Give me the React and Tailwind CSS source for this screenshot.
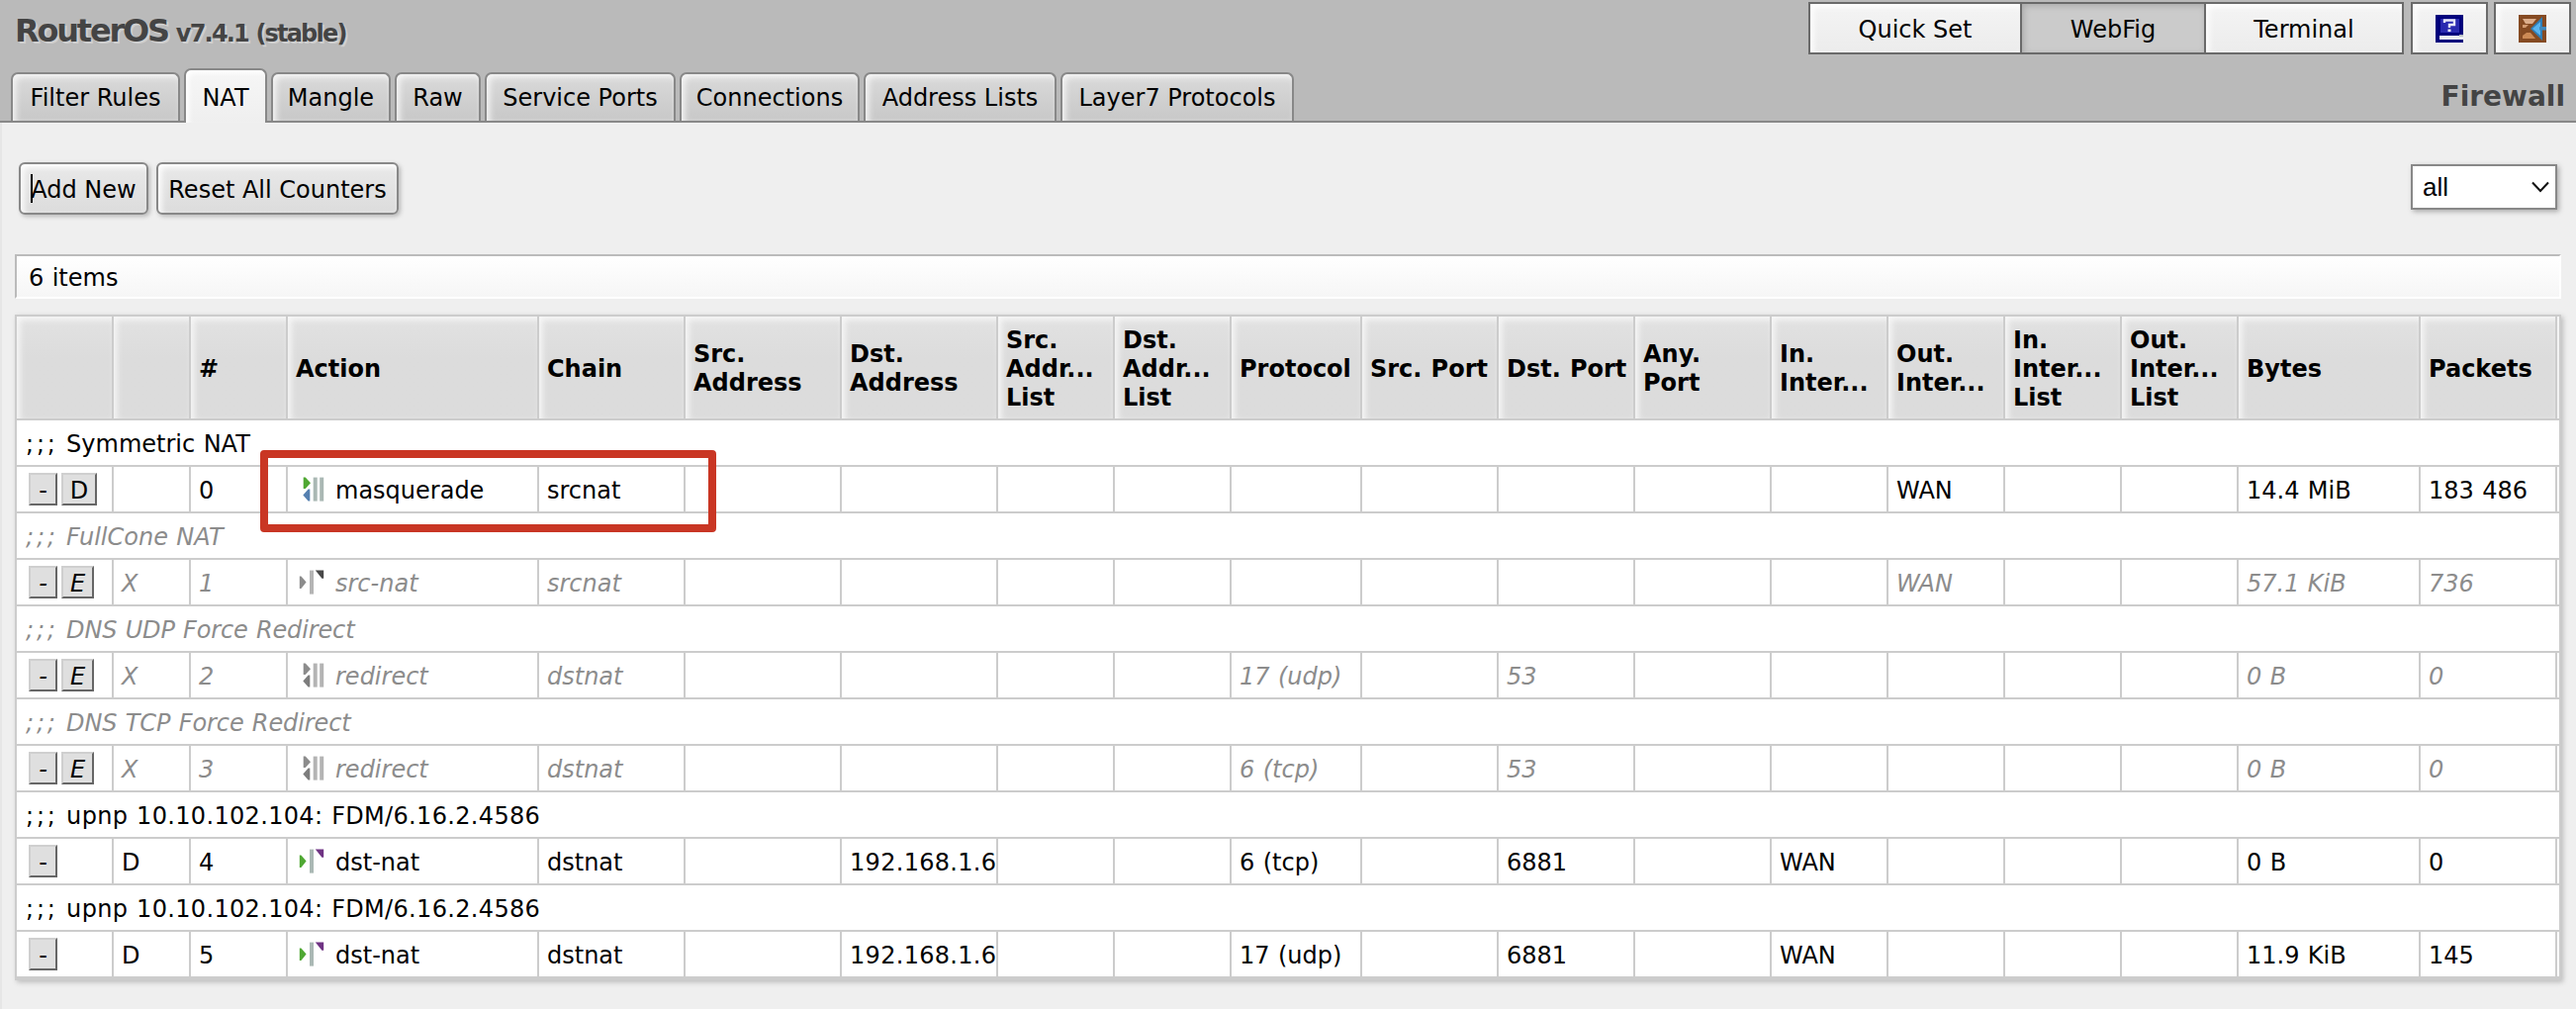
const headerTabs = [
  ["Filter Rules", "w-[171px]"],
  ["NAT", "w-[84px]"],
  ["Mangle", "w-[121px]"],
  ["Raw", "w-[87px]"],
  ["Service Ports", "w-[193px]"],
  ["Connections", "w-[182px]"],
  ["Address Lists", "w-[195px]"],
  ["Layer7 Protocols", "w-[236px]"],
];

const columns = [
  ["", 98],
  ["", 78],
  ["#", 98],
  ["Action", 254],
  ["Chain", 148],
  ["Src.\nAddress", 158],
  ["Dst.\nAddress", 158],
  ["Src.\nAddr...\nList", 118],
  ["Dst.\nAddr...\nList", 118],
  ["Protocol", 132],
  ["Src. Port", 138],
  ["Dst. Port", 138],
  ["Any.\nPort", 138],
  ["In.\nInter...", 118],
  ["Out.\nInter...", 118],
  ["In.\nInter...\nList", 118],
  ["Out.\nInter...\nList", 118],
  ["Bytes", 184],
  ["Packets", 138],
  ["", 2],
];

const rules = [
  { comment: "Symmetric NAT", toggle: "D", flag: "", icon: "masquerade", action: "masquerade", chain: "srcnat", out: "WAN", bytes: "14.4 MiB", packets: "183 486" },
  { comment: "FullCone NAT", disabled: true, toggle: "E", flag: "X", icon: "nat", action: "src-nat", chain: "srcnat", out: "WAN", bytes: "57.1 KiB", packets: "736" },
  { comment: "DNS UDP Force Redirect", tracking: "tracking-[-0.14px]", disabled: true, toggle: "E", flag: "X", icon: "masquerade", action: "redirect", chain: "dstnat", protocol: "17 (udp)", dstPort: "53", bytes: "0 B", packets: "0" },
  { comment: "DNS TCP Force Redirect", tracking: "tracking-[-0.1px]", disabled: true, toggle: "E", flag: "X", icon: "masquerade", action: "redirect", chain: "dstnat", protocol: "6 (tcp)", dstPort: "53", bytes: "0 B", packets: "0" },
  { comment: "upnp 10.10.102.104: FDM/6.16.2.4586", tracking: "tracking-[0.33px]", flag: "D", icon: "nat", action: "dst-nat", chain: "dstnat", dst: "192.168.1.6", protocol: "6 (tcp)", dstPort: "6881", in: "WAN", bytes: "0 B", packets: "0" },
  { comment: "upnp 10.10.102.104: FDM/6.16.2.4586", tracking: "tracking-[0.33px]", flag: "D", icon: "nat", action: "dst-nat", chain: "dstnat", dst: "192.168.1.6", protocol: "17 (udp)", dstPort: "6881", in: "WAN", bytes: "11.9 KiB", packets: "145" },
];

function ActionIcon({ kind, disabled }) {
  const green = disabled ? "#8c8c8c" : "#4fa833";
  const blue = disabled ? "#7d7d7d" : "#5580b0";
  const bar = disabled ? "#b4b4b4" : "#aab8b4";
  const corner = disabled ? "#484848" : "#6f3383";
  return (
    <svg width="29" height="28" viewBox="0 0 29 28" className="ml-2 shrink-0">
      {kind === "masquerade" ? (
        <>
          <path d="M7.7 1.5 L9.7 1.5 L15 7.3 L9.7 13 L7.7 13 Z" fill={green} />
          <path d="M14.3 13.5 L12.6 13.5 L7.3 19.5 L12.6 25.6 L14.3 25.6 Z" fill={blue} />
          <rect x="17.7" y="1.6" width="4" height="24" fill={bar} />
          <rect x="24.2" y="1.6" width="4" height="24" fill={bar} />
        </>
      ) : (
        <>
          <path d="M3.8 7.4 H5.4 L10.6 13.6 L5.4 20 H3.8 Z" fill={green} />
          <rect x="14" y="1.6" width="4" height="24" fill={bar} />
          <path d="M19.8 1.6 H28.2 V9.8 H26.4 Z" fill={corner} />
        </>
      )}
    </svg>
  );
}

function HelpIcon() {
  return (
    <svg width="30" height="30" viewBox="0 0 30 30">
      <rect x="1" y="1" width="28" height="28" fill="#00007c" />
      <rect x="6" y="5" width="19" height="14" fill="#2a2ab0" />
      <path d="M10 9 V6.5 H20 V11 H15 V14" fill="none" stroke="#e8e8f8" strokeWidth="2.4" />
      <rect x="13.5" y="15.5" width="3" height="2.6" fill="#e8e8f8" />
      <rect x="5" y="22" width="24" height="4" fill="#eceff0" />
      <rect x="25" y="21" width="4" height="2" fill="#b9c0c4" />
    </svg>
  );
}

function ExitIcon() {
  return (
    <svg width="30" height="30" viewBox="0 0 30 30">
      <rect x="1" y="1" width="28" height="28" fill="#854a22" />
      <path d="M5 5 H19 L15 10 H8 Z" fill="#dcae8c" />
      <path d="M5 11 H11 L8 14 H5 Z" fill="#d29a70" />
      <path d="M5 25 V22 L9 19 H13 L18 25 Z" fill="#cc8a55" />
      <path d="M25 3 V27 L13 15 Z" fill="#2f7fb8" />
      <path d="M23 8 V22 L15 15 Z" fill="#58b4f0" />
      <rect x="22" y="13" width="7" height="3.5" fill="#4189bd" />
    </svg>
  );
}

function MiniButton({ children, className }) {
  return (
    <button
      className={
        "flex h-[33px] items-center justify-center border-2 border-t-[#cfcfcf] border-l-[#cfcfcf] border-r-[#666] border-b-[#666] bg-[#dfdfdf] pt-[3px] leading-none text-black " +
        className
      }
    >
      {children}
    </button>
  );
}

function Cell({ children, className = "" }) {
  return (
    <td
      className={
        "h-[47px] overflow-hidden border-r-2 border-b-2 border-[#ccc] p-0 pt-[3px] pl-2 align-middle whitespace-nowrap " +
        className
      }
    >
      {children}
    </td>
  );
}

function Rule({ rule, index }) {
  const tone = rule.disabled ? "text-[#8c8c8c] italic" : "text-black";
  return (
    <>
      <tr className={tone}>
        <td colSpan={20} className="h-[47px] border-b-2 border-[#ccc] p-0 pt-[3px] pl-[9px] align-middle">
          <span className="tracking-[2.8px]">;;;</span>{" "}
          <span className={rule.tracking}>{rule.comment}</span>
        </td>
      </tr>
      <tr className={tone}>
        <td className="h-[47px] border-r-2 border-b-2 border-[#ccc] p-0 pl-3 align-middle">
          <div className="flex gap-1">
            <MiniButton className="w-[29px]">-</MiniButton>
            {rule.toggle && (
              <MiniButton className={rule.toggle === "D" ? "w-[36px]" : "w-[33px]"}>{rule.toggle}</MiniButton>
            )}
          </div>
        </td>
        <Cell>{rule.flag}</Cell>
        <Cell>{index}</Cell>
        <td className="h-[47px] border-r-2 border-b-2 border-[#ccc] p-0 align-middle">
          <div className="flex items-center">
            <ActionIcon kind={rule.icon} disabled={rule.disabled} />
            <span className="ml-[11px] pt-[3px]">{rule.action}</span>
          </div>
        </td>
        <Cell>{rule.chain}</Cell>
        <Cell />
        <Cell className="tracking-[0.3px]">{rule.dst}</Cell>
        <Cell />
        <Cell />
        <Cell>{rule.protocol}</Cell>
        <Cell />
        <Cell>{rule.dstPort}</Cell>
        <Cell />
        <Cell>{rule.in}</Cell>
        <Cell>{rule.out}</Cell>
        <Cell />
        <Cell />
        <Cell>{rule.bytes}</Cell>
        <Cell>{rule.packets}</Cell>
        <td className="h-[47px] border-b-2 border-[#ccc] p-0" />
      </tr>
    </>
  );
}

const topButton =
  "flex items-center justify-center border-[#6a6a6a] bg-linear-to-b from-[#f4f4f4] to-[#ececec] shadow-[inset_3px_3px_6px_#fff]";

const actionButton =
  "relative flex h-[53px] items-center justify-center rounded-[6px] border-2 border-[#888] bg-linear-to-b from-[#e9e9e9] to-[#dcdcdc] pt-[3px] shadow-[2px_2px_4px_#bbb,inset_3px_3px_6px_#fff]";

export default function App() {
  return (
    <div className="h-[1020px] w-[2604px] overflow-hidden bg-[#efefef] font-['DejaVu_Sans',sans-serif] text-[24px] leading-[29px] text-black [word-spacing:0.8px]">
      <header className="flex h-[124px] flex-col justify-between border-b-2 border-[#888] bg-[#bababa]">
        <div className="flex items-start justify-between pt-[2px] pr-[5px] pl-[15px]">
          <h1 className="mt-[11px] flex items-baseline font-bold whitespace-nowrap text-[#444] [text-shadow:2px_2px_0_#d0d0d0]">
            <span className="text-[32px] leading-[36px] tracking-[-2.2px]">RouterOS</span>
            <span className="ml-[8px] text-[24px] tracking-[-1.8px]">v7.4.1 (stable)</span>
          </h1>
          <div className="flex h-[53px]">
            <button className={topButton + " w-[214px] border-y-2 border-l-2 pt-[3px]"}>Quick Set</button>
            <button className="flex w-[188px] items-center justify-center border-2 border-[#6a6a6a] bg-[#cbcbcb] pt-[3px] shadow-[inset_2px_2px_6px_#aaa]">
              WebFig
            </button>
            <button className={topButton + " w-[200px] border-y-2 border-r-2 pt-[3px]"}>Terminal</button>
            <button className={topButton + " ml-[7px] w-[78px] border-2"}>
              <HelpIcon />
            </button>
            <button className={topButton + " ml-[6px] w-[78px] border-2"}>
              <ExitIcon />
            </button>
          </div>
        </div>
        <div className="flex items-end justify-between pr-[11px] pl-[11px]">
          <nav className="flex items-end gap-1">
            {headerTabs.map(([label, width]) => {
              const active = label === "NAT";
              return (
                <button
                  key={label}
                  className={
                    "flex justify-center rounded-t-[7px] border-2 border-b-0 border-[#888] whitespace-nowrap " +
                    width +
                    (active
                      ? " -mb-[2px] h-[55px] bg-linear-to-b from-[#f6f6f6] to-[#efefef] pt-[14px] shadow-[inset_3px_3px_5px_#fff]"
                      : " h-[49px] bg-linear-to-b from-[#dadada] to-[#c8c8c8] pt-[10px] shadow-[inset_3px_3px_6px_#f6f6f6]")
                  }
                >
                  {label}
                </button>
              );
            })}
          </nav>
          <h2 className="mb-[7px] text-[28px] leading-[34px] font-bold text-[#444]">Firewall</h2>
        </div>
      </header>

      <main className="h-[896px] border-l-2 border-[#e6e6e6] pr-[15px] pl-[13px]">
        <div className="flex items-start justify-between pt-[40px] pr-1 pl-[4px]">
          <div className="flex gap-[8px]">
            <button className={actionButton + " w-[131px]"}>
              Add New
              <span className="absolute top-[10px] left-[10px] h-[29px] w-[2px] bg-black" />
            </button>
            <button className={actionButton + " w-[245px]"}>Reset All Counters</button>
          </div>
          <div className="mt-[2px] flex h-[46px] w-[148px] items-center justify-between border-2 border-[#888] bg-white pr-[6px] pl-[10px] font-['Liberation_Sans',sans-serif] text-[26px] shadow-[2px_2px_5px_#aaa]">
            all
            <svg width="18" height="12" viewBox="0 0 18 12" fill="none" stroke="#111" strokeWidth="2">
              <path d="M1 1.5 L9 10 L17 1.5" />
            </svg>
          </div>
        </div>

        <div className="mt-[40px] flex h-[45px] items-center border-2 border-t-[#bbb] border-r-white border-b-white border-l-[#bbb] bg-linear-to-b from-white to-[#f6f6f6] pt-[3px] pl-[12px]">
          6 items
        </div>

        <div className="relative mt-[16px] w-[2574px] border-2 border-[#ccc] bg-white shadow-[2px_2px_5px_#bbb]">
          <table className="w-[2570px] table-fixed border-separate border-spacing-0">
            <colgroup>
              {columns.map(([, width], i) => (
                <col key={i} style={{ width }} />
              ))}
            </colgroup>
            <thead>
              <tr>
                {columns.map(([label], i) => (
                  <th
                    key={i}
                    className={
                      "h-[105px] border-b-2 border-[#ccc] bg-linear-to-b from-[#e2e2e2] to-[#dcdcdc] to-40% p-0 pt-[3px] text-left align-middle font-bold whitespace-pre shadow-[inset_3px_3px_6px_#f8f8f8] " +
                      (i === columns.length - 1 ? "" : "border-r-2 pl-2")
                    }
                  >
                    {label}
                  </th>
                ))}
              </tr>
            </thead>
            <tbody>
              {rules.map((rule, i) => (
                <Rule key={i} rule={rule} index={i} />
              ))}
            </tbody>
          </table>
          <div className="absolute top-[135px] left-[246px] h-[83px] w-[461px] rounded-[4px] border-8 border-[#c93624]" />
        </div>
      </main>
    </div>
  );
}
